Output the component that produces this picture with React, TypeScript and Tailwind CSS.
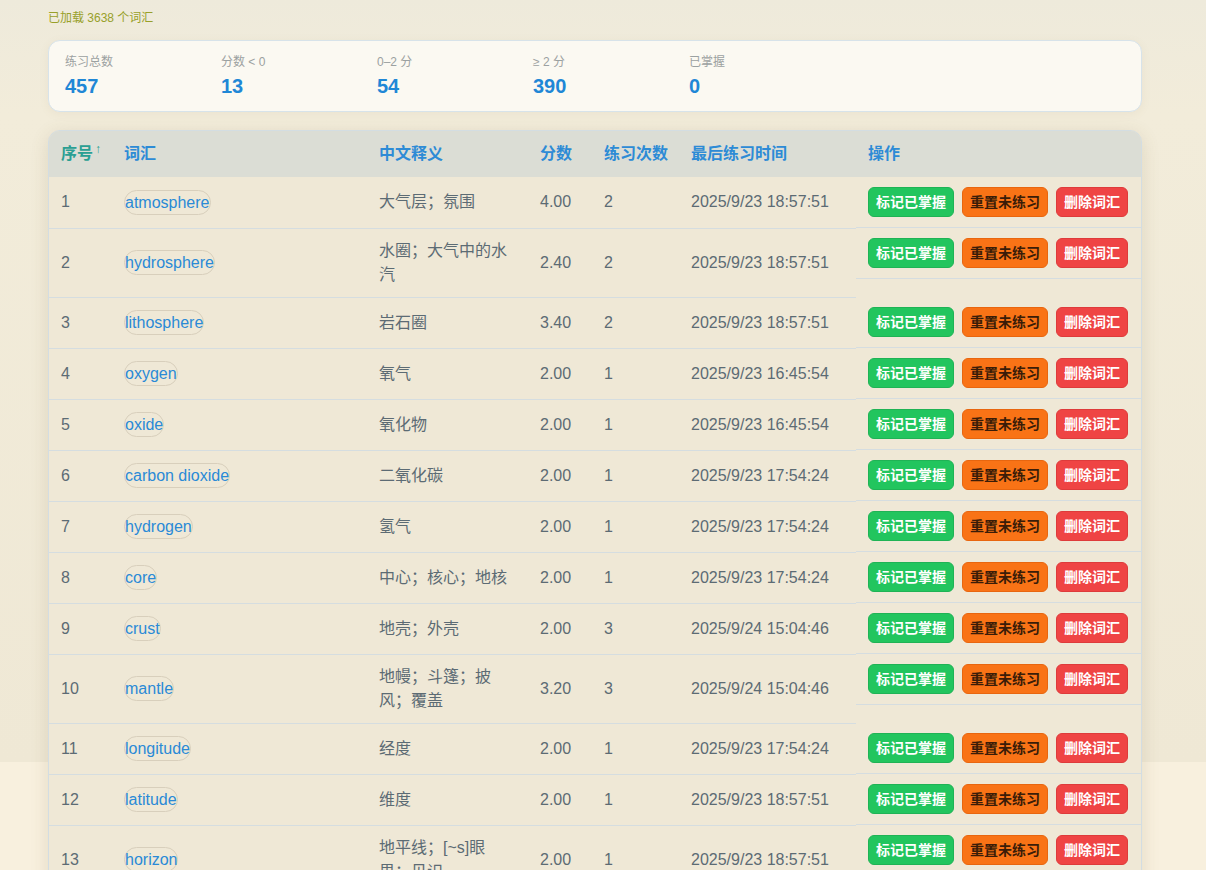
const stats = [
  { label: '练习总数', value: '457' },
  { label: '分数 < 0', value: '13' },
  { label: '0–2 分', value: '54' },
  { label: '≥ 2 分', value: '390' },
  { label: '已掌握', value: '0' },
];

interface WordRow {
  id: number;
  word: string;
  meaning: string;
  score: string;
  count: number;
  time: string;
}

const rows: WordRow[] = [
  { id: 1, word: 'atmosphere', meaning: '大气层；氛围', score: '4.00', count: 2, time: '2025/9/23 18:57:51' },
  { id: 2, word: 'hydrosphere', meaning: '水圈；大气中的水汽', score: '2.40', count: 2, time: '2025/9/23 18:57:51' },
  { id: 3, word: 'lithosphere', meaning: '岩石圈', score: '3.40', count: 2, time: '2025/9/23 18:57:51' },
  { id: 4, word: 'oxygen', meaning: '氧气', score: '2.00', count: 1, time: '2025/9/23 16:45:54' },
  { id: 5, word: 'oxide', meaning: '氧化物', score: '2.00', count: 1, time: '2025/9/23 16:45:54' },
  { id: 6, word: 'carbon dioxide', meaning: '二氧化碳', score: '2.00', count: 1, time: '2025/9/23 17:54:24' },
  { id: 7, word: 'hydrogen', meaning: '氢气', score: '2.00', count: 1, time: '2025/9/23 17:54:24' },
  { id: 8, word: 'core', meaning: '中心；核心；地核', score: '2.00', count: 1, time: '2025/9/23 17:54:24' },
  { id: 9, word: 'crust', meaning: '地壳；外壳', score: '2.00', count: 3, time: '2025/9/24 15:04:46' },
  { id: 10, word: 'mantle', meaning: '地幔；斗篷；披风；覆盖', score: '3.20', count: 3, time: '2025/9/24 15:04:46' },
  { id: 11, word: 'longitude', meaning: '经度', score: '2.00', count: 1, time: '2025/9/23 17:54:24' },
  { id: 12, word: 'latitude', meaning: '维度', score: '2.00', count: 1, time: '2025/9/23 18:57:51' },
  { id: 13, word: 'horizon', meaning: '地平线；[~s]眼界；见识', score: '2.00', count: 1, time: '2025/9/23 18:57:51' },
];

const cell = 'px-3 py-2.5 border-b border-[#d5dde0] align-middle';
const head = 'px-3 py-[11px] font-bold whitespace-nowrap text-[#2d8bd6]';

export default function App() {
  return (
    <div className="min-h-screen bg-[#f8f0de] bg-[linear-gradient(180deg,#eeeadb_0%,#f2ecda_15%,#efe8d5_100%)] bg-no-repeat bg-[length:100%_762px] px-12 pt-2.5 pb-10 font-['Liberation_Sans','Noto_Sans_CJK_SC',sans-serif]">
      <p className="text-xs leading-4 text-[#98a02a]">已加载 3638 个词汇</p>

      <div className="mt-3.5 w-[1094px] rounded-xl border border-[#d7e3ea] bg-[#fbf9f2] px-4 py-[13px] flex shadow-[0_2px_10px_rgba(150,130,90,0.08)]">
        {stats.map((s) => (
          <div key={s.label} className="w-[156px]">
            <div className="text-xs leading-4 text-[#9ba1a1]">{s.label}</div>
            <div className="mt-1 text-xl leading-6 font-bold text-[#1f87d6]">{s.value}</div>
          </div>
        ))}
      </div>

      <div className="mt-[18px] w-[1094px] rounded-xl border border-[#d3dde2] overflow-hidden bg-[#efe8d6] shadow-[0_4px_18px_rgba(120,100,60,0.16)]">
        <table className="w-full table-fixed border-collapse text-base leading-6 text-[#5c6b74]">
          <thead>
            <tr className="bg-[#dbddd5] text-left">
              <th className="w-[63px] px-3 py-[11px] font-bold whitespace-nowrap text-[#2a9f93]">
                序号<span className="ml-0.5 relative -top-1.5 text-xs font-bold leading-4">↑</span>
              </th>
              <th className={`w-[255px] ${head}`}>词汇</th>
              <th className={`w-[161px] ${head}`}>中文释义</th>
              <th className={`w-[64px] ${head}`}>分数</th>
              <th className={`w-[87px] ${head}`}>练习次数</th>
              <th className={`w-[177px] ${head}`}>最后练习时间</th>
              <th className={head}>操作</th>
            </tr>
          </thead>
          <tbody>
            {rows.map((r) => (
              <tr key={r.id}>
                <td className={cell}>{r.id}</td>
                <td className={cell}>
                  <span className="inline-block rounded-full border border-[#d8cfbc] leading-[21px] py-px text-[#2a8ad6]">
                    {r.word}
                  </span>
                </td>
                <td className={cell}>{r.meaning}</td>
                <td className={cell}>{r.score}</td>
                <td className={cell}>{r.count}</td>
                <td className={cell}>{r.time}</td>
                <td className="flex gap-2 px-3 py-2.5 border-b border-[#d5dde0]">
                  <button className="rounded-md border border-[#1fb355] bg-[#22c55e] px-[7px] py-1 text-sm leading-5 font-bold text-white">
                    标记已掌握
                  </button>
                  <button className="rounded-md border border-[#e8660f] bg-[#f97316] px-[7px] py-1 text-sm leading-5 font-bold text-[#3a1c08]">
                    重置未练习
                  </button>
                  <button className="rounded-md border border-[#de3b3b] bg-[#ef4444] px-[7px] py-1 text-sm leading-5 font-bold text-white">
                    删除词汇
                  </button>
                </td>
              </tr>
            ))}
          </tbody>
        </table>
      </div>
    </div>
  );
}
